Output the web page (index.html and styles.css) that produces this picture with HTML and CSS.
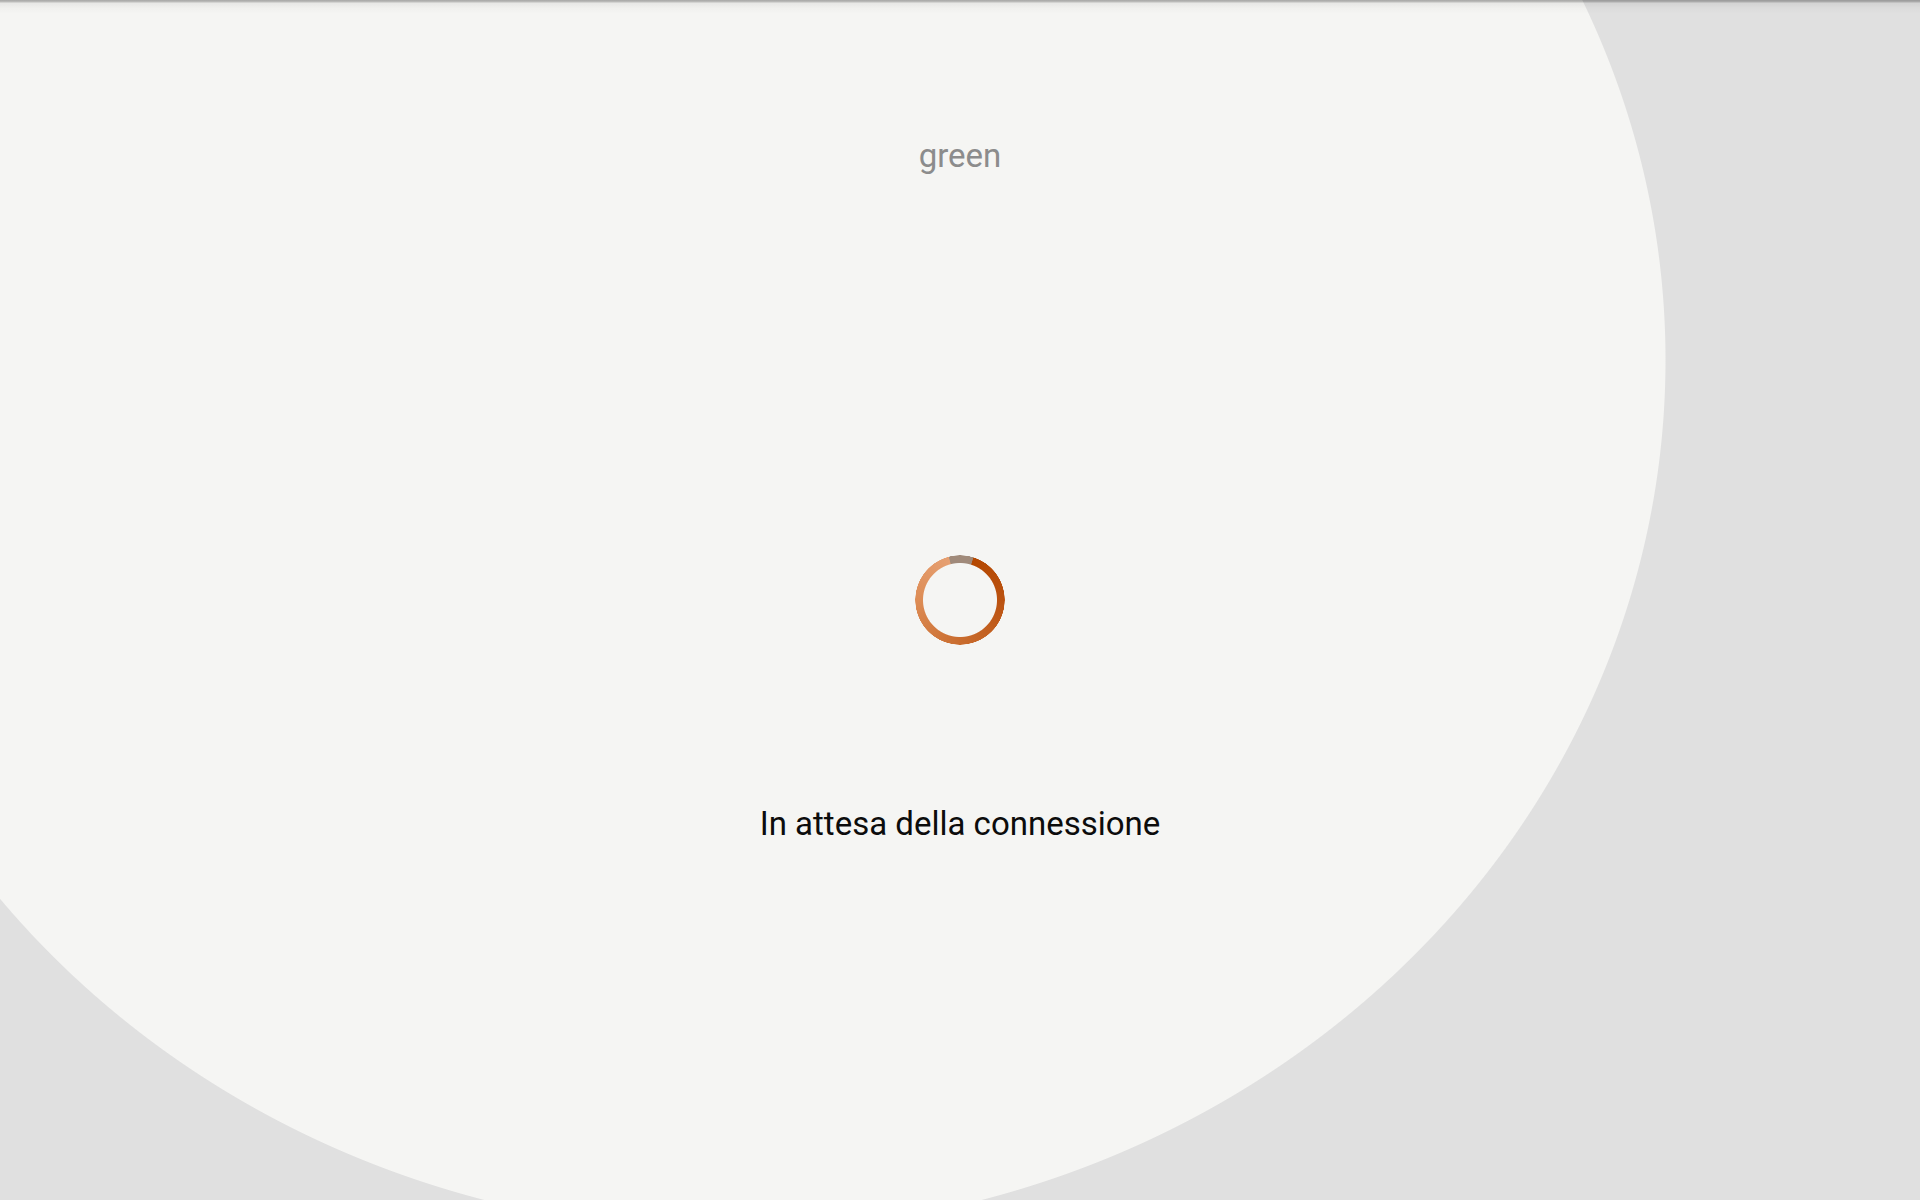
FILE: index.html
```html
<!DOCTYPE html>
<html lang="it">
<head>
<meta charset="utf-8">
<title>In attesa della connessione</title>
<link rel="stylesheet" href="styles.css">
</head>
<body>
<main class="screen">
  <div class="device-name">green</div>
  <div class="spinner" role="progressbar" aria-label="Caricamento"></div>
  <div class="status">In attesa della connessione</div>
</main>
</body>
</html>
```
FILE: styles.css
```css
html, body {
  margin: 0;
  padding: 0;
}

body {
  width: 1920px;
  height: 1200px;
  overflow: hidden;
  font-family: Roboto, "Noto Sans", "Liberation Sans", sans-serif;
  background:
    linear-gradient(to bottom,
      rgba(0, 0, 0, 0.32) 0,
      rgba(0, 0, 0, 0.22) 2px,
      rgba(0, 0, 0, 0.06) 3px,
      rgba(0, 0, 0, 0.02) 8px,
      rgba(0, 0, 0, 0) 14px) top / 100% 14px no-repeat,
    radial-gradient(933px 872px at 733px 360px,
      #f5f5f3 calc(100% - 1px),
      #e0e0e0 100%);
  background-color: #e0e0e0;
}

.screen {
  display: flex;
  flex-direction: column;
  align-items: center;
  padding-top: 136px;
}

.device-name {
  font-size: 33px;
  line-height: 40px;
  color: #8c8c8c;
}

.spinner {
  width: 90px;
  height: 90px;
  margin-top: 379px;
  border-radius: 50%;
  background: conic-gradient(
    #a08a7a 0deg 17deg,
    #b44700 18deg,
    #bb5210 90deg,
    #c96c2e 180deg,
    #dd8c55 270deg,
    #e6a072 345deg,
    #a08a7a 346deg 360deg);
  -webkit-mask: radial-gradient(farthest-side, transparent calc(100% - 8.5px), #000 calc(100% - 7.5px), #000 calc(100% - 0.5px), transparent 100%);
  mask: radial-gradient(farthest-side, transparent calc(100% - 8.5px), #000 calc(100% - 7.5px), #000 calc(100% - 0.5px), transparent 100%);
}

.status {
  margin-top: 159px;
  font-size: 33px;
  line-height: 40px;
  color: #0c0c0c;
}
```
